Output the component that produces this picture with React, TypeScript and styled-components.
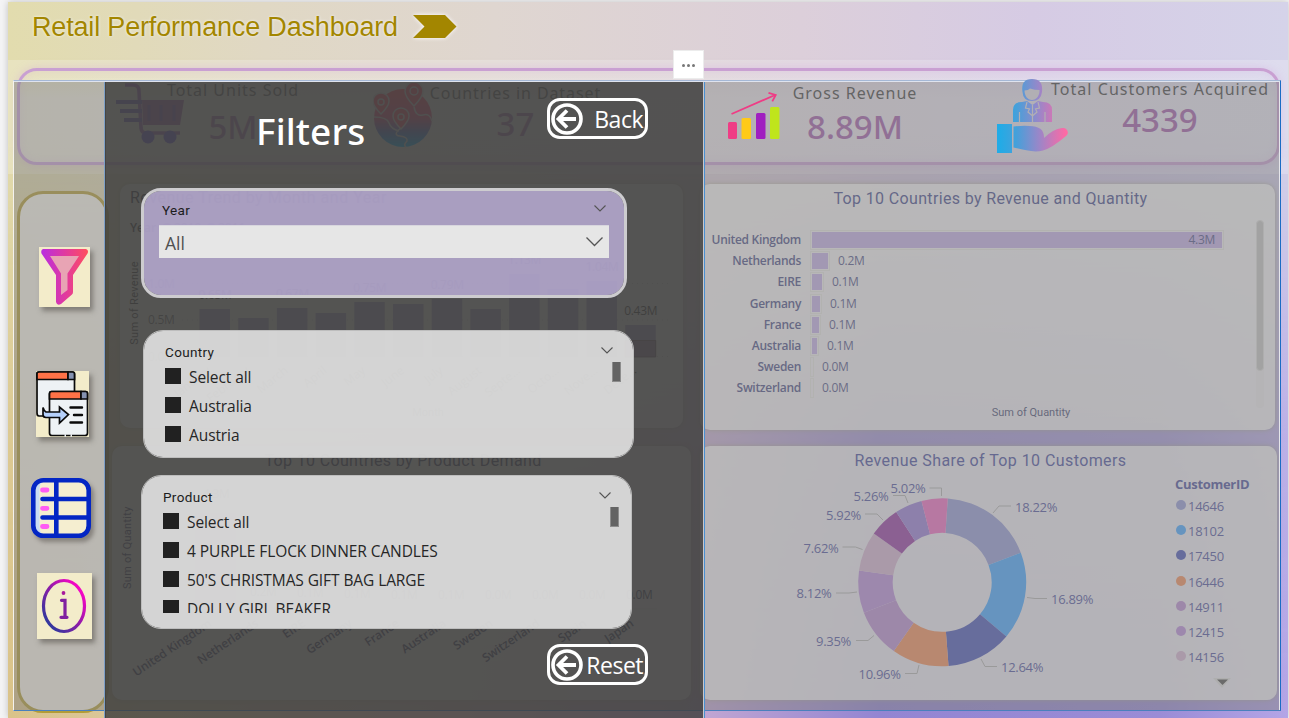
import React from "react";
import styled, { createGlobalStyle } from "styled-components";

const humanist = `"Open Sans", "Noto Sans", sans-serif`;
const din = `Roboto, "Liberation Sans", sans-serif`;
const lucida = `"Noto Sans", "Open Sans", sans-serif`;

const GlobalStyle = createGlobalStyle`
  * { box-sizing: border-box; }
  body { margin: 0; background: #fbfbfb; overflow: hidden; font-family: ${humanist}; }
  svg { display: block; }
  svg text { white-space: pre; }
`;

const Page = styled.main`
  width: 1289px;
  height: 718px;
  padding: 2px 1px 0 8px;
  background: #f4f4f5;
  overflow: hidden;
  position: relative;
`;

const Canvas = styled.div`
  position: relative;
  height: 716px;
  background: linear-gradient(90deg, #e2dcae 0%, #e0d8c4 20%, #dfd6d0 38%, #dccfda 62%, #d6cbe4 80%, #d5d3e9 100%);
  box-shadow: 0 0 7px rgba(0, 0, 0, 0.22);
  display: flex;
  flex-direction: column;

  &::before {
    content: "";
    position: absolute;
    inset: 0;
    background: linear-gradient(90deg, #dac389 0%, #dcc8a0 12%, #d8b8b8 35%, #bfa4d2 55%, #9385d2 68%, #9a8cd6 90%, #b4a5e6 100%);
    -webkit-mask-image: linear-gradient(180deg, transparent 18%, rgba(0, 0, 0, 0.75) 60%, #000 97%);
    mask-image: linear-gradient(180deg, transparent 18%, rgba(0, 0, 0, 0.75) 60%, #000 97%);
  }
`;

const Header = styled.header`
  height: 58px;
  padding: 8px 0 0 24px;
  display: flex;
  align-items: flex-start;
  gap: 15px;
  color: #a38600;
`;

const Title = styled.h1`
  margin: 0;
  font: 400 27px/34px "Liberation Sans", Arial, sans-serif;
  letter-spacing: -0.17px;
  white-space: nowrap;
  text-shadow: 0 0 3px rgba(255, 255, 255, 0.8);
`;

const TitleArrow = styled.svg`
  margin-top: 4px;
  filter: drop-shadow(0 0 2px #fff);
`;

const KpiBand = styled.section`
  position: relative;
  height: 114px;
  padding: 8px 8px 0 9px;
  background: rgba(255, 255, 255, 0.22);
`;

const KpiCard = styled.div`
  height: 97px;
  border: 3px solid #c9a0d2;
  border-radius: 20px;
  display: flex;
  background: linear-gradient(180deg, transparent 5%, rgba(238, 236, 242, 0.45) 30%);
  box-shadow: 0 0 8px rgba(205, 150, 220, 0.35), inset 0 0 8px rgba(205, 150, 220, 0.2);
`;

const Kpi = styled.div<{ $indent: number }>`
  display: flex;
  align-items: flex-start;
  margin-left: ${(p) => p.$indent}px;
`;

const KpiIcon = styled.div<{ $top: number }>`
  position: relative;
  z-index: 2;
  margin-top: ${(p) => p.$top}px;
`;

const KpiText = styled.div<{ $gap: number; $width: number; $top: number }>`
  width: ${(p) => p.$width}px;
  margin: ${(p) => p.$top}px 0 0 ${(p) => p.$gap}px;
  display: flex;
  flex-direction: column;
  align-items: center;
  white-space: nowrap;
`;

const KpiLabel = styled.div<{ $spacing: number }>`
  font: 400 16px/20px ${lucida};
  letter-spacing: ${(p) => p.$spacing}px;
  color: #484848;
`;

const KpiValue = styled.div<{ $top: number }>`
  margin-top: ${(p) => p.$top}px;
  font: 500 33px/36px ${lucida};
  letter-spacing: 0;
  color: #a260aa;
`;

const Body = styled.div`
  position: relative;
  flex: 1;
  display: flex;
  padding-left: 9px;
`;

const Sidebar = styled.nav`
  width: 92px;
  height: 522px;
  margin-top: 17px;
  border: 3px solid #b29c38;
  border-radius: 26px;
  background: rgba(248, 246, 240, 0.86);
  display: flex;
  flex-direction: column;
  align-items: flex-start;
`;

const NavTile = styled.button<{ $w: number; $h: number; $x: number; $gap: number; $plain?: boolean }>`
  position: relative;
  z-index: 2;
  width: ${(p) => p.$w}px;
  height: ${(p) => p.$h}px;
  margin: ${(p) => p.$gap}px 0 0 ${(p) => p.$x}px;
  padding: 0;
  border: 0;
  flex: none;
  background: ${(p) => (p.$plain ? "transparent" : "#f3ecca")};
  box-shadow: ${(p) => (p.$plain ? "none" : "3px 4px 5px rgba(70, 65, 60, 0.5)")};
  ${(p) => p.$plain && "filter: drop-shadow(3px 4px 2px rgba(70,65,60,.45));"}
`;

const Charts = styled.div`
  display: flex;
  flex-direction: column;
  padding-top: 10px;
`;

const ChartRow = styled.div<{ $indent: number; $gap: number; $top?: number }>`
  display: flex;
  align-items: flex-start;
  gap: ${(p) => p.$gap}px;
  margin: ${(p) => p.$top ?? 0}px 0 0 ${(p) => p.$indent}px;
`;

const Card = styled.section<{ $w: number; $h: number }>`
  width: ${(p) => p.$w}px;
  height: ${(p) => p.$h}px;
  border-radius: 10px;
  background: rgba(248, 248, 246, 0.84);
  box-shadow: 0 0 4px rgba(170, 170, 140, 0.8);
  display: flex;
  flex-direction: column;
`;

const ChartTitle = styled.h2<{ $pad?: string; $align?: string; $spacing?: number; $color?: string }>`
  margin: 0;
  padding: ${(p) => p.$pad ?? "4px 0 0"};
  text-align: ${(p) => p.$align ?? "center"};
  font: 400 16px/20px ${din};
  letter-spacing: ${(p) => p.$spacing ?? 0.35}px;
  color: ${(p) => p.$color ?? "#4a5090"};
  white-space: nowrap;
`;

const BarArea = styled.div`
  flex: 1;
  display: flex;
  justify-content: space-between;
  padding: 11px 11px 0 0;
`;

const BarRows = styled.div`
  width: 540px;
  padding-top: 9.6px;
`;

const BarRow = styled.div`
  display: flex;
  align-items: center;
  height: 21.15px;
`;

const BarLabel = styled.span`
  width: 101px;
  margin-right: 9px;
  text-align: right;
  font: 600 12px/16px ${humanist};
  letter-spacing: -0.3px;
  color: #4e5288;
  white-space: nowrap;
`;

const BarOutline = styled.span`
  padding: 1px;
  border: 1px solid #e4e4e0;
  height: 20px;
  display: block;
`;

const Bar = styled.span`
  height: 16px;
  display: flex;
  align-items: center;
  justify-content: flex-end;
  background: #c4b0e6;
`;

const BarValue = styled.span<{ $inside?: boolean }>`
  ${(p) => (p.$inside ? "padding-right: 7px;" : "margin-left: 8px;")}
  font: 400 12px/16px ${humanist};
  letter-spacing: -0.3px;
  color: #55588c;
`;

const AxisTitle = styled.div`
  padding: 7px 0 0 122px;
  text-align: center;
  font: 400 11px/14px ${din};
  letter-spacing: 0;
  color: #4e5278;
`;

const ScrollTrack = styled.div`
  width: 8px;
  height: 188px;
  border-radius: 4px;
  background: rgba(230, 230, 230, 0.5);
`;

const ScrollThumb = styled.div`
  height: 151px;
  border: 1px solid #dcdcdc;
  border-radius: 4px;
  background: #c4c4c4;
`;

const DonutArea = styled.div`
  display: flex;
`;

const Legend = styled.div`
  padding-top: 1px;
  display: flex;
  flex-direction: column;
`;

const LegendTitle = styled.div`
  font: 700 13px/18px ${humanist};
  letter-spacing: -0.3px;
  color: #50559f;
`;

const LegendItem = styled.div`
  height: 25.3px;
  display: flex;
  align-items: center;
  gap: 2px;
  font: 400 13px/18px ${humanist};
  letter-spacing: -0.25px;
  color: #5458a2;
`;

const Dot = styled.span<{ $c: string }>`
  width: 10px;
  height: 10px;
  margin: -2px 0 0 1px;
  border-radius: 50%;
  background: ${(p) => p.$c};
`;

const LegendMore = styled.svg`
  margin: 7px 0 0 37px;
`;

const Scrim = styled.div`
  position: absolute;
  z-index: 1;
  left: 13px;
  top: 80px;
  width: 1268px;
  height: 631px;
  background: rgba(128, 128, 128, 0.5);
  border-top: 1px solid #a5b8d6;
  border-left: 1px solid #f4f2ee;
  border-right: 1px solid #1a6cc4;
  border-bottom: 1px solid #4a80bc;
  box-shadow: inset 0 1px 0 #dfe3ee, inset -1px 0 0 #e6e6ea;
`;

const Panel = styled.aside`
  position: absolute;
  z-index: 3;
  left: 104px;
  top: 82px;
  width: 601px;
  height: 636px;
  padding: 16px 56px 0 36px;
  background: rgba(60, 60, 59, 0.81);
  border-left: 1px solid #7d9fc6;
  border-right: 1px solid #4a8fd0;
  box-shadow: inset 1px 0 0 rgba(60, 60, 60, 0.6), inset -1px 0 0 #c8c8cc;
  display: flex;
  flex-direction: column;
  align-items: flex-start;
`;

const PanelHead = styled.div`
  align-self: stretch;
  display: flex;
  justify-content: space-between;
  align-items: flex-start;
  padding-left: 115px;
`;

const PanelTitle = styled.h2`
  margin: 8px 0 0;
  font: 500 37px/50px ${lucida};
  letter-spacing: 0.1px;
  color: #fff;
`;

const PillButton = styled.button<{ $top?: number }>`
  width: 101px;
  height: 41px;
  margin-top: ${(p) => p.$top ?? 0}px;
  padding: 0 2px 0 1px;
  border: 3px solid #fff;
  border-radius: 13px;
  background: transparent;
  color: #fff;
  display: flex;
  align-items: center;
  justify-content: space-between;
  font: 400 23px/32px ${humanist};
  letter-spacing: -0.5px;

  svg { flex: none; }
  span { padding-top: 1px; }
`;

const Slicer = styled.section<{ $w: number; $h: number; $top: number; $left: number; $tone?: string }>`
  width: ${(p) => p.$w}px;
  height: ${(p) => p.$h}px;
  margin: ${(p) => p.$top}px 0 0 ${(p) => p.$left}px;
  padding: ${(p) => (p.$tone === "lilac" ? "9px 15px 0 15px" : "11px 10px 0 21px")};
  flex: none;
  border-radius: 20px;
  border: ${(p) => (p.$tone === "lilac" ? "3px solid #cdcccf" : "1px solid #bdbdbd")};
  background: ${(p) => (p.$tone === "lilac" ? "rgba(183,170,211,.86)" : "rgba(230,230,230,.88)")};
  background-clip: padding-box;
  overflow: hidden;
`;

const SlicerHead = styled.div<{ $right: number; $left: number }>`
  height: 20px;
  margin-left: ${(p) => p.$left}px;
  padding-right: ${(p) => p.$right}px;
  display: flex;
  align-items: center;
  justify-content: space-between;
  font: 400 13.5px/20px ${din};
  letter-spacing: 0.35px;
  color: #1c1c1c;

  svg { margin-top: -4px; }
`;

const Dropdown = styled.div`
  height: 33px;
  margin-top: 5px;
  padding: 0 6px 0 6px;
  display: flex;
  align-items: center;
  justify-content: space-between;
  background: #e6e6e6;
  border-top: 1px solid #d8d6de;
  font: 400 17.5px/30px ${humanist};
  color: #505050;

  span { padding-top: 2px; }
`;

const SlicerBody = styled.div<{ $h: number }>`
  height: ${(p) => p.$h}px;
  overflow: hidden;
  display: flex;
  justify-content: space-between;
`;

const Option = styled.label`
  height: 29px;
  display: flex;
  align-items: center;
  gap: 8px;
  font: 400 15.5px/22px ${humanist};
  letter-spacing: -0.09px;
  color: #262626;
  white-space: nowrap;
`;

const Box = styled.span`
  width: 16px;
  height: 16px;
  margin-top: -1px;
  background: #212121;
`;

const SlicerThumb = styled.div`
  width: 9px;
  height: 21px;
  margin: -1px 2px 0 0;
  flex: none;
  background: #636363;
  border: 1px solid #8c8c8c;
`;

const MoreOptions = styled.button`
  position: absolute;
  z-index: 4;
  left: 673px;
  top: 50px;
  width: 31px;
  height: 29px;
  padding: 2px 0 0;
  border: 1px solid #ececec;
  background: #fff;
  display: flex;
  align-items: center;
  justify-content: center;
  gap: 2px;

  i { width: 3px; height: 3px; border-radius: 50%; background: #777; }
`;

const Chevron = ({ w, sw = 1.1 }: { w: number; sw?: number }) => (
  <svg width={w} height={w / 2 + 1} viewBox={`0 0 ${w} ${w / 2 + 1}`} fill="none" stroke="#555" strokeWidth={sw}>
    <path d={`M.5 .5 L${w / 2} ${w / 2} L${w - 0.5} .5`} />
  </svg>
);

const BackArrow = () => (
  <svg width="32" height="32" viewBox="0 0 32 32" fill="none" stroke="#fff">
    <circle cx="16" cy="16" r="14" strokeWidth="3.6" />
    <path d="M25 16H8M16 7.5L7.5 16l8.5 8.5" strokeWidth="3.8" />
  </svg>
);

const CartIcon = () => (
  <svg width="68" height="62" viewBox="116 83 68 62" fill="none">
    <path d="M125 86h8q6 0 6 6l2 37q.5 5 5 5h34" stroke="#8a689c" strokeWidth="3.6" />
    <path d="M142 101h42l-4 25h-37z" fill="#8c6690" />
    <path d="M149 106v16M161 106v16M174 106v16" stroke="#746098" strokeWidth="3" />
    <path d="M116 103h26M120 112h22M124 121h18" stroke="#7068a0" strokeWidth="4" />
    <circle cx="148" cy="138" r="6.5" fill="#6a60b0" />
    <circle cx="170" cy="138" r="6.5" fill="#6a60b0" />
  </svg>
);

const GlobeIcon = () => (
  <svg width="60" height="65" viewBox="373 84 60 65" fill="none">
    <defs>
      <linearGradient id="globe" x1="0" y1="0" x2="0" y2="1">
        <stop stopColor="#c85462" /><stop offset=".5" stopColor="#b45878" /><stop offset=".75" stopColor="#5a70a8" /><stop offset="1" stopColor="#2aa0cc" />
      </linearGradient>
    </defs>
    <circle cx="403" cy="119" r="29" fill="url(#globe)" />
    <g stroke="#a4a4a4" strokeWidth="1.5">
      <path d="M374 118q13 0 15 6t10 8M401 129q-9 7-1 8t7 5q-4 4-1 6M414 108q2 10 9 8t9 6" />
      <path d="M381 115q-8-8-8-13a8 8 0 0 1 16 0q0 5-8 13zM414 107q-9-9-9-15a9 9 0 0 1 18 0q0 6-9 15zM401 130q-8-8-8-13a8 8 0 0 1 16 0q0 5-8 13z" fill="#c05468" />
      <circle cx="381" cy="103" r="3" /><circle cx="414" cy="92" r="4" /><circle cx="401" cy="118" r="3" />
    </g>
  </svg>
);

const GrowthIcon = () => (
  <svg width="53" height="49" viewBox="727 91 53 49">
    <g>
      <rect x="728" y="122" width="9" height="17" rx="1.5" fill="#ef3c85" />
      <rect x="741.5" y="118" width="9.5" height="21" rx="1.5" fill="#ffca18" />
      <rect x="756" y="113" width="9.5" height="26" rx="1.5" fill="#a01fc0" />
      <rect x="770" y="107" width="9.5" height="32" rx="1.5" fill="#bfe51c" />
    </g>
    <path d="M731.5 114L775 95M768.5 92.8l7.2 2.2-3.4 6.4" fill="none" stroke="#ef3c85" strokeWidth="1.8" />
  </svg>
);

const CustomerIcon = () => (
  <svg width="72" height="75" viewBox="996 79 72 75">
    <defs>
      <linearGradient id="cust" gradientUnits="userSpaceOnUse" x1="1000" y1="0" x2="1066" y2="0">
        <stop stopColor="#22abe6" /><stop offset=".25" stopColor="#46a0da" /><stop offset=".6" stopColor="#9c86c8" /><stop offset="1" stopColor="#ff69a4" />
      </linearGradient>
    </defs>
    <path d="M997 124h15v29h-15zM1013.500 126.500q9-1 16-.5c10 .3 15 4 14.500 12q9-9 18-10c5-1 8 5 4 8q-14 12-23 14.500c-9 2.500-18-.5-29.500-3z" fill="url(#cust)" />
    <path d="M1022.500 92q-2-13 9.500-13t10 13q-1 9-10 9t-9.500-9z" fill="url(#cust)" />
    <path d="M1024.500 90.500q4 0 5.500-2 5 1.500 9.500 1.500c.5 5-3 10-7.500 10s-7.500-4.500-7.500-9.500z" fill="#b1afb4" />
    <path d="M1013 122v-12q0-8 9-8l5-1 5.500 4 5.500-4 5 1q9 0 9 8v12z" fill="url(#cust)" />
    <path d="M1019.500 112v10M1045 112v10M1027 102l-1.500 6 4 1-1.500 3 4.500 4 4.500-4-1.500-3 4-1-1.500-6M1032.500 105v17" fill="none" stroke="#b1afb4" strokeWidth="1.2" />
  </svg>
);

const FilterIcon = () => (
  <svg width="51" height="60" viewBox="39 247 51 60">
    <defs><linearGradient id="fun" x1="0" x2="1"><stop stopColor="#b82ee0" /><stop offset=".5" stopColor="#e03aa0" /><stop offset="1" stopColor="#ff4f5e" /></linearGradient></defs>
    <path d="M43 249h43q3 1 1.500 4.500L73 275v17q0 1.500-1 2.500l-11 9.500q-4 2-5-2V275L41.500 253.500q-1-3.500 1.500-4.500z" fill="url(#fun)" />
    <path d="M50 256h29L67.500 273.500v16.500l-6.500 5v-21.500z" fill="#e8a4b4" />
  </svg>
);

const TransferIcon = () => (
  <svg width="53" height="67" viewBox="36 371 53 67" stroke="#0a0a0a" strokeWidth="1.700">
    <path d="M37 374q0-2 2-2h33.500q2 0 2 2v42H39q-2 0-2-3z" fill="#eef2f5" />
    <path d="M37 379.500v-6q0-1.500 2-1.500h29v7.500z" fill="#ff7247" />
    <path d="M68 372h4.500q2 0 2 2v5.500H68z" fill="#8592b0" />
    <path d="M49.500 394q0-2.500 2-2.500h34q2 0 2 2V433q0 2.500-2.500 2.500H52q-2.500 0-2.500-2.500z" fill="#eef2f5" />
    <path d="M49.500 399v-5q0-2.500 2-2.500H81v7.500z" fill="#ff7247" />
    <path d="M81 391.500h4.500q2 0 2 2v5.500H81z" fill="#8592b0" />
    <path d="M43 407.500v7q0 3 3 3h13.500v5.500l9-8.500-9-7.500v5H46q-2-1-3-4.500z" fill="#b5d0fb" />
    <path d="M70.500 407.500h11.500M74 415h8M70.500 422.500h11.500" strokeWidth="2.400" strokeLinecap="round" />
    <path d="M64.500 435.500h1.500M70.500 435.500h1.500" stroke="#eef2f5" strokeWidth="2.400" />
  </svg>
);

const TableIcon = () => (
  <svg width="60" height="60" viewBox="31 478 60 60" fill="none" stroke="#0326c4">
    <rect x="33.500" y="480.500" width="55" height="55" rx="9" fill="#f5eed0" stroke="none" />
    <path d="M35.500 490q0-7 7-8-3 2-3 7v38q0 5 3 7-7-1-7-8z" fill="#c8dcf4" stroke="none" />
    <path d="M56.300 480v56M42.500 499h45M42.500 517.500h45" strokeWidth="4.600" strokeLinecap="round" />
    <path d="M42.500 490h4.500M42.500 508.300h4.500M42.500 526.500h4.500" stroke="#ff5cf4" strokeWidth="4.800" strokeLinecap="round" />
    <rect x="33.300" y="480.300" width="55.400" height="55.400" rx="10" strokeWidth="4.600" />
  </svg>
);

const InfoIcon = () => (
  <svg width="55" height="66" viewBox="37 573 55 66" fill="none">
    <defs>
      <linearGradient id="info" x1="0" y1="1" x2="1" y2="0"><stop offset=".1" stopColor="#2a3a9c" /><stop offset=".5" stopColor="#8c1ca8" /><stop offset=".85" stopColor="#f406c4" /></linearGradient>
    </defs>
    <ellipse cx="64" cy="606" rx="20.500" ry="25.500" stroke="url(#info)" strokeWidth="3.200" />
    <circle cx="63.500" cy="593" r="1.900" fill="#a8189c" />
    <path d="M61.500 600.300h3.500v17M61 617.300h6" stroke="#8020a0" strokeWidth="3.200" strokeLinecap="round" />
  </svg>
);

const months: [string, number, string?][] = [
  ["January", 309, "0.65M"], ["February", 318], ["March", 308, "0.67M"], ["April", 313], ["May", 302, "0.75M"], ["June", 304],
  ["July", 299, "0.79M"], ["August", 309], ["Septe...", 274, "1.13M"], ["Octo...", 289], ["Nove...", 281, "1.04M"], ["Dece...", 325, "0.43M"],
];

const TrendChart = () => (
  <svg width="563" height="214" viewBox="120 212 563 214" fontFamily="Open Sans, sans-serif" fontSize="12" fill="#181818">
    <text x="130" y="232" fontWeight="600">Year</text>
    <circle cx="167" cy="228" r="5" fill="#6a3a6a" /><text x="174" y="232">2010</text>
    <circle cx="211" cy="228" r="5" fill="#8a80c8" /><text x="218" y="232">2011</text>
    <text transform="translate(138 303) rotate(-90)" textAnchor="middle" fontFamily={din} fontSize="11" letterSpacing=".3">Sum of Revenue</text>
    {[["1.0M", 283.5], ["0.5M", 320], ["0.0M", 356.500]].map(([t, y]) => (
      <g key={t}>
        <text x="148" y={Number(y) + 4} letterSpacing="-.3" fillOpacity=".75">{t}</text>
        <path d={`M182 ${y}H670`} stroke="#ccc" strokeDasharray="1 4" />
      </g>
    ))}
    {months.map(([m, top, label], i) => {
      const x = 199.500 + i * 38.700;
      return (
        <g key={m}>
          <rect x={x} y={top} width="30.500" height={357 - top} fill="#a094c6" />
          {m === "Dece..." && <path d={`M${x} 340.500h30.500v16.500h-30.500z`} fill="#8a7090" stroke="#5a3a50" strokeWidth=".8" />}
          {label && <text x={x + 15.500} y={top - 10} textAnchor="middle" letterSpacing="-.3">{label}</text>}
          <text transform={`translate(${x + 12} 372) rotate(-38)`} textAnchor="end">{m}</text>
        </g>
      );
    })}
    <text x="428" y="416" textAnchor="middle" fontSize="11" fontFamily={din}>Month</text>
  </svg>
);

const demand: [string, string][] = [
  ["United Kingdom", "4.3M"], ["Netherlands", "0.2M"], ["EIRE", "0.1M"], ["Germany", "0.1M"], ["France", "0.1M"],
  ["Australia", "0.1M"], ["Sweden", "0.0M"], ["Switzerland", "0.0M"], ["Spain", "0.0M"], ["Japan", "0.0M"],
];

const DemandChart = () => (
  <svg width="579" height="230" viewBox="112 470 579 230" fontFamily="Open Sans, sans-serif" fontSize="12" fill="#202050">
    <text transform="translate(130 547) rotate(-90)" textAnchor="middle" fontFamily={din} fontSize="11" letterSpacing=".3">Sum of Quantity</text>
    {demand.map(([c, v], i) => (
      <g key={c}>
        <rect x={194 + i * 47} y={i ? 609 - (i < 2 ? 4 : 1) : 512} width="41" height={i ? (i < 2 ? 3 : 1) : 98} fill="#c4b0e6" opacity={i ? 0.3 : 1} />
        <text x={215.500 + i * 47.200} y={i ? 595 + Math.min(i, 4) : 497} textAnchor="middle" letterSpacing="-.2">{v}</text>
        <text transform={`translate(${211.500 + i * 47.100} 625) rotate(-34)`} textAnchor="end" fontWeight="600" letterSpacing="-.1">{c}</text>
      </g>
    ))}
  </svg>
);

const slices: { pct: number; c: string; x: number; y: number; line: string }[] = [
  { pct: 18.22, c: "#969cd6", x: 1015, y: 512, line: "M993 513l6-7h12" },
  { pct: 16.89, c: "#4ca8ff", x: 1051, y: 604, line: "M1027 597.500l8 1h12" },
  { pct: 12.64, c: "#4f5ab8", x: 1001, y: 672, line: "M981 659l4 7.500h12" },
  { pct: 10.96, c: "#f09060", x: 858.5, y: 679, line: "M919 665l-2 8.500h-12" },
  { pct: 9.35, c: "#bb90d2", x: 816, y: 646, line: "M874 635.500l-6 5h-12" },
  { pct: 8.12, c: "#bb90da", x: 796.5, y: 598, line: "M857 592l-8 1h-13" },
  { pct: 7.62, c: "#d4b4d2", x: 803.5, y: 553, line: "M862.500 549.500l-7-2.500h-13" },
  { pct: 5.92, c: "#9640a4", x: 826, y: 520, line: "M883 520l-6-6h-12" },
  { pct: 5.26, c: "#9a80d6", x: 853.5, y: 501, line: "M908 503l-3-7.500h-12" },
  { pct: 5.02, c: "#ee70c4", x: 890.5, y: 493, line: "M941.500 496v-8h-12" },
];

const DonutChart = () => {
  const cx = 942.2, cy = 582.3;
  let at = 3.8;
  const pt = (r: number, deg: number) => {
    const a = (deg * Math.PI) / 180;
    return `${(cx + r * Math.sin(a)).toFixed(2)} ${(cy - r * Math.cos(a)).toFixed(2)}`;
  };
  return (
    <svg width="475" height="226" viewBox="700 474 475 226" fontFamily="Open Sans, sans-serif" fontSize="13">
      {slices.map((s) => {
        const from = at;
        const to = (at += s.pct * 3.6);
        return (
          <g key={s.pct}>
            <path d={`M${pt(84, from)}A84 84 0 0 1 ${pt(84, to)}L${pt(49.5, to)}A49.5 49.5 0 0 0 ${pt(49.5, from)}Z`} fill={s.c} />
            <path d={s.line} fill="none" stroke="#b4b4b4" />
            <text x={s.x} y={s.y} fill="#5458a2" letterSpacing="-.3">{s.pct.toFixed(2)}%</text>
          </g>
        );
      })}
    </svg>
  );
};

const bars: [string, number, string][] = [
  ["United Kingdom", 410, "4.3M"], ["Netherlands", 16, "0.2M"], ["EIRE", 10, "0.1M"], ["Germany", 8, "0.1M"],
  ["France", 7, "0.1M"], ["Australia", 5, "0.1M"], ["Sweden", 0, "0.0M"], ["Switzerland", 0, "0.0M"],
];

const customers = ["14646", "18102", "17450", "16446", "14911", "12415", "14156"];

const OptionSlicer = ({ title, items, h, top, left, w, bodyH }: { title: string; items: string[]; h: number; top: number; left: number; w: number; bodyH: number }) => (
  <Slicer $w={w} $h={h} $top={top} $left={left}>
    <SlicerHead $right={10} $left={0}>{title}<Chevron w={12} /></SlicerHead>
    <SlicerBody $h={bodyH}>
      <div>{items.map((o) => <Option key={o}><Box />{o}</Option>)}</div>
      <SlicerThumb />
    </SlicerBody>
  </Slicer>
);

export default function App() {
  return (
    <Page>
      <GlobalStyle />
      <Canvas>
        <Header>
          <Title>Retail Performance Dashboard</Title>
          <TitleArrow width="44" height="25" viewBox="0 0 44 25"><path d="M0 1h32l11.500 11.500L32 24H0l11.500-11.500z" fill="#a38600" /></TitleArrow>
        </Header>
        <KpiBand>
          <KpiCard>
            <Kpi $indent={96}>
              <KpiIcon $top={11}><CartIcon /></KpiIcon>
              <KpiText $gap={-17} $width={132} $top={9}><KpiLabel $spacing={1}>Total Units Sold</KpiLabel><KpiValue $top={9}>5M</KpiValue></KpiText>
            </Kpi>
            <Kpi $indent={74}>
              <KpiIcon $top={12}><GlobeIcon /></KpiIcon>
              <KpiText $gap={-3} $width={171} $top={12}><KpiLabel $spacing={0.92}>Countries in Dataset</KpiLabel><KpiValue $top={3}>37</KpiValue></KpiText>
            </Kpi>
            <Kpi $indent={126}>
              <KpiIcon $top={20}><GrowthIcon /></KpiIcon>
              <KpiText $gap={13} $width={124} $top={12}><KpiLabel $spacing={1}>Gross Revenue</KpiLabel><KpiValue $top={6}>8.89M</KpiValue></KpiText>
            </Kpi>
            <Kpi $indent={79}>
              <KpiIcon $top={8}><CustomerIcon /></KpiIcon>
              <KpiText $gap={-17} $width={218} $top={8}><KpiLabel $spacing={1.05}>Total Customers Acquired</KpiLabel><KpiValue $top={3}>4339</KpiValue></KpiText>
            </Kpi>
          </KpiCard>
        </KpiBand>
        <Body>
          <Sidebar>
            <NavTile $w={51} $h={60} $x={19} $gap={53}><FilterIcon /></NavTile>
            <NavTile $w={53} $h={66} $x={16} $gap={64}><TransferIcon /></NavTile>
            <NavTile $w={60} $h={60} $x={11} $gap={41} $plain><TableIcon /></NavTile>
            <NavTile $w={55} $h={66} $x={17} $gap={35}><InfoIcon /></NavTile>
          </Sidebar>
          <Charts>
            <ChartRow $indent={11} $gap={17}>
              <Card $w={563} $h={244}>
                <ChartTitle $align="left" $pad="4px 0 4px 10px" $color="#14142c" $spacing={0.5}>Revenue Trend by Month and Year</ChartTitle>
                <TrendChart />
              </Card>
              <Card $w={575} $h={246}>
                <ChartTitle $pad="5px 0 0 6px">Top 10 Countries by Revenue and Quantity</ChartTitle>
                <BarArea>
                  <BarRows>
                    {bars.map(([name, len, value]) => (
                      <BarRow key={name}>
                        <BarLabel>{name}</BarLabel>
                        <BarOutline><Bar style={{ width: len }}>{len > 100 && <BarValue $inside>{value}</BarValue>}</Bar></BarOutline>
                        {len <= 100 && <BarValue>{value}</BarValue>}
                      </BarRow>
                    ))}
                    <AxisTitle>Sum of Quantity</AxisTitle>
                  </BarRows>
                  <ScrollTrack><ScrollThumb /></ScrollTrack>
                </BarArea>
              </Card>
            </ChartRow>
            <ChartRow $indent={3} $gap={9} $top={16}>
              <Card $w={579} $h={254}>
                <ChartTitle $color="#20204c" $pad="5px 0 0 3px">Top 10 Countries by Product Demand</ChartTitle>
                <DemandChart />
              </Card>
              <Card $w={577} $h={254}>
                <ChartTitle $pad="5px 0 3px 4px" $spacing={0.42} $color="#4c52a0">Revenue Share of Top 10 Customers</ChartTitle>
                <DonutArea>
                  <DonutChart />
                  <Legend>
                    <LegendTitle>CustomerID</LegendTitle>
                    {customers.map((c, i) => <LegendItem key={c}><Dot $c={slices[i].c} />{c}</LegendItem>)}
                    <LegendMore width="20" height="12" viewBox="0 0 20 12">
                      <path d="M1 1h18l-9 10z" fill="#ddd" /><path d="M5 2.500h11l-5.500 5.500z" fill="#555" />
                    </LegendMore>
                  </Legend>
                </DonutArea>
              </Card>
            </ChartRow>
          </Charts>
        </Body>
      </Canvas>
      <Scrim />
      <Panel>
        <PanelHead>
          <PanelTitle>Filters</PanelTitle>
          <PillButton><BackArrow /><span>Back</span></PillButton>
        </PanelHead>
        <Slicer $w={486} $h={110} $top={32} $left={0} $tone="lilac">
          <SlicerHead $right={3} $left={3}>Year<Chevron w={12} /></SlicerHead>
          <Dropdown><span>All</span><Chevron w={17} sw={1.3} /></Dropdown>
        </Slicer>
        <OptionSlicer title="Country" items={["Select all", "Australia", "Austria"]} w={491} h={128} top={32} left={2} bodyH={90} />
        <OptionSlicer title="Product" items={["Select all", "4 PURPLE FLOCK DINNER CANDLES", "50'S CHRISTMAS GIFT BAG LARGE", "DOLLY GIRL BEAKER"]} w={491} h={154} top={17} left={0} bodyH={106} />
        <PanelHead>
          <span />
          <PillButton $top={15}><BackArrow /><span>Reset</span></PillButton>
        </PanelHead>
      </Panel>
      <MoreOptions><i /><i /><i /></MoreOptions>
    </Page>
  );
}
